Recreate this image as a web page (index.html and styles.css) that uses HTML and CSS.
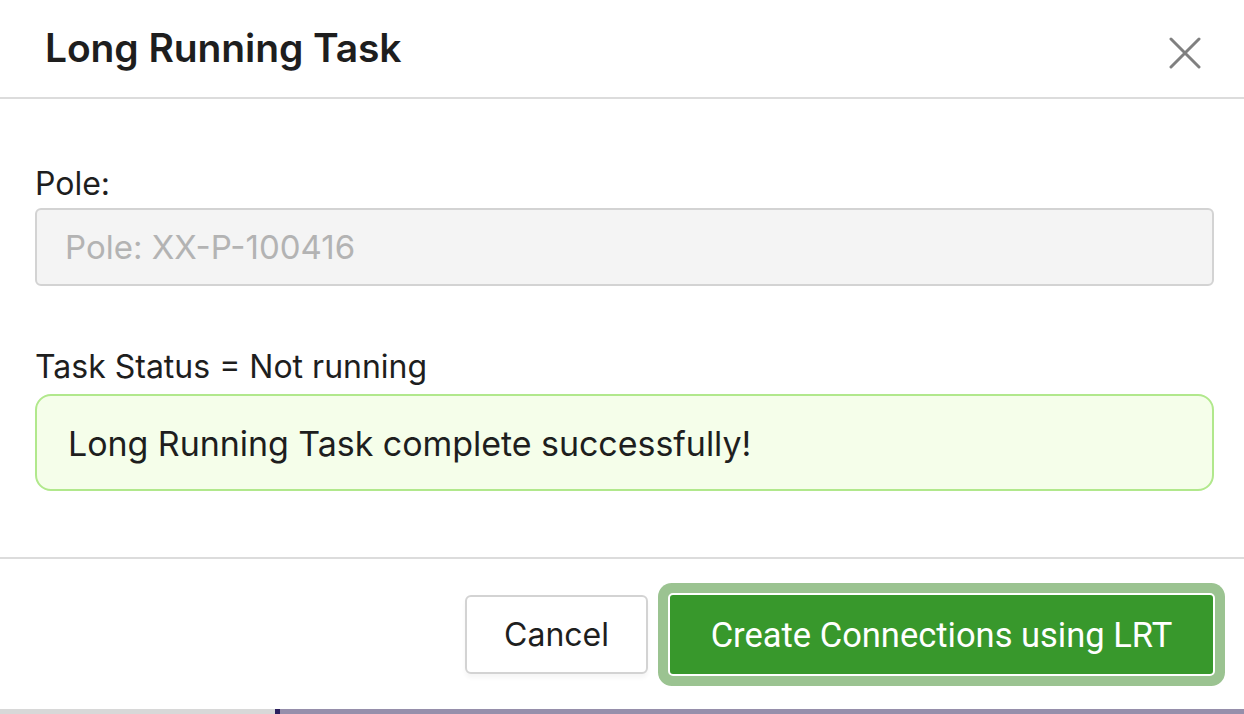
FILE: index.html
```html
<!DOCTYPE html>
<html lang="en">
<head>
<meta charset="utf-8">
<title>Long Running Task</title>
<link rel="stylesheet" href="styles.css">
</head>
<body>
<div class="page">
  <div class="modal">
    <div class="modal-header">
      <h2 class="modal-title">Long Running Task</h2>
      <button class="close" aria-label="Close">
        <svg width="32" height="32" viewBox="0 0 32 32"><path d="M2 2 L30 30 M30 2 L2 30" stroke="#808080" stroke-width="3" stroke-linecap="round" fill="none"/></svg>
      </button>
    </div>
    <div class="modal-body">
      <label class="field-label">Pole:</label>
      <input class="field-input" type="text" placeholder="Pole: XX-P-100416" disabled>
      <div class="status-label">Task Status = Not running</div>
      <div class="alert">Long Running Task complete successfully!</div>
    </div>
    <div class="modal-footer">
      <button class="btn btn-cancel">Cancel</button>
      <button class="btn btn-primary">Create Connections using LRT</button>
    </div>
  </div>
  <div class="backdrop">
    <div class="bd-gray"></div>
    <div class="bd-dark"></div>
    <div class="bd-purple"></div>
  </div>
</div>
</body>
</html>
```
FILE: styles.css
```css
* { box-sizing: border-box; }
html, body { margin: 0; padding: 0; }
body {
  width: 1244px;
  height: 714px;
  overflow: hidden;
  font-family: "Inter", "Liberation Sans", sans-serif;
  color: #1e1e1e;
  background: #ffffff;
}
.page {
  display: flex;
  flex-direction: column;
  height: 714px;
}
.modal {
  height: 709px;
  flex-shrink: 0;
  background: #ffffff;
  border-bottom-left-radius: 6px;
  border-bottom-right-radius: 6px;
  display: flex;
  flex-direction: column;
  position: relative;
  z-index: 1;
}
.modal-header {
  height: 99px;
  flex-shrink: 0;
  border-bottom: 2px solid #dcdcdc;
  display: flex;
  align-items: center;
  justify-content: space-between;
  padding: 0 43px 0 45px;
}
.modal-title {
  margin: 0 0 2px 0;
  font-size: 39px;
  font-weight: 600;
  letter-spacing: -0.1px;
  color: #1e1e1e;
}
.close {
  border: 0;
  background: transparent;
  padding: 0;
  margin-top: 8px;
  width: 32px;
  height: 32px;
  display: flex;
}
.modal-body {
  height: 458px;
  flex-shrink: 0;
  display: flex;
  flex-direction: column;
  padding: 66px 30px 0 35px;
}
.field-label, .status-label {
  font-size: 32px;
  line-height: 38px;
  display: block;
  flex-shrink: 0;
}
.field-input {
  flex-shrink: 0;
  margin-top: 5px;
  height: 78px;
  width: 1179px;
  background: #f4f4f4;
  border: 2px solid #d3d3d3;
  border-radius: 6px;
  padding: 0 28px;
  font-family: "Inter", "Liberation Sans", sans-serif;
  font-size: 33px;
  color: #b0b0b0;
}
.field-input::placeholder { color: #b3b3b3; }
.status-label { margin-top: 62px; }
.alert {
  flex-shrink: 0;
  margin-top: 8px;
  width: 1179px;
  height: 97px;
  background: #f5feea;
  border: 2px solid #b1e88c;
  border-radius: 16px;
  padding: 2px 31px 0;
  display: flex;
  align-items: center;
  font-size: 34px;
  letter-spacing: -0.05px;
  color: #1e1e1e;
}
.modal-footer {
  flex: 1;
  border-top: 2px solid #dcdcdc;
  display: flex;
  justify-content: flex-end;
  align-items: flex-start;
  gap: 20px;
  padding: 34px 29px 0 0;
}
.btn {
  font-family: "Inter", "Liberation Sans", sans-serif;
  font-size: 32px;
  cursor: pointer;
  flex-shrink: 0;
}
.btn-cancel {
  margin-top: 2px;
  width: 183px;
  height: 79px;
  background: #ffffff;
  border: 2px solid #d3d3d3;
  border-radius: 6px;
  color: #1e1e1e;
  box-shadow: 0 4px 4px rgba(0,0,0,0.04);
}
.btn-primary {
  width: 547px;
  height: 83px;
  background: #38982c;
  border: 2px solid #ffffff;
  border-radius: 5px;
  color: #ffffff;
  font-family: "Roboto", "Liberation Sans", sans-serif;
  font-size: 34.5px;
  box-shadow: 0 0 0 10px #9bc391;
}
.backdrop {
  height: 5px;
  display: flex;
  flex-shrink: 0;
}
.bd-gray { width: 275px; background: #d8d8d8; }
.bd-dark { width: 5px; background: #2b1f5e; }
.bd-purple { flex: 1; background: #968fab; }
```
